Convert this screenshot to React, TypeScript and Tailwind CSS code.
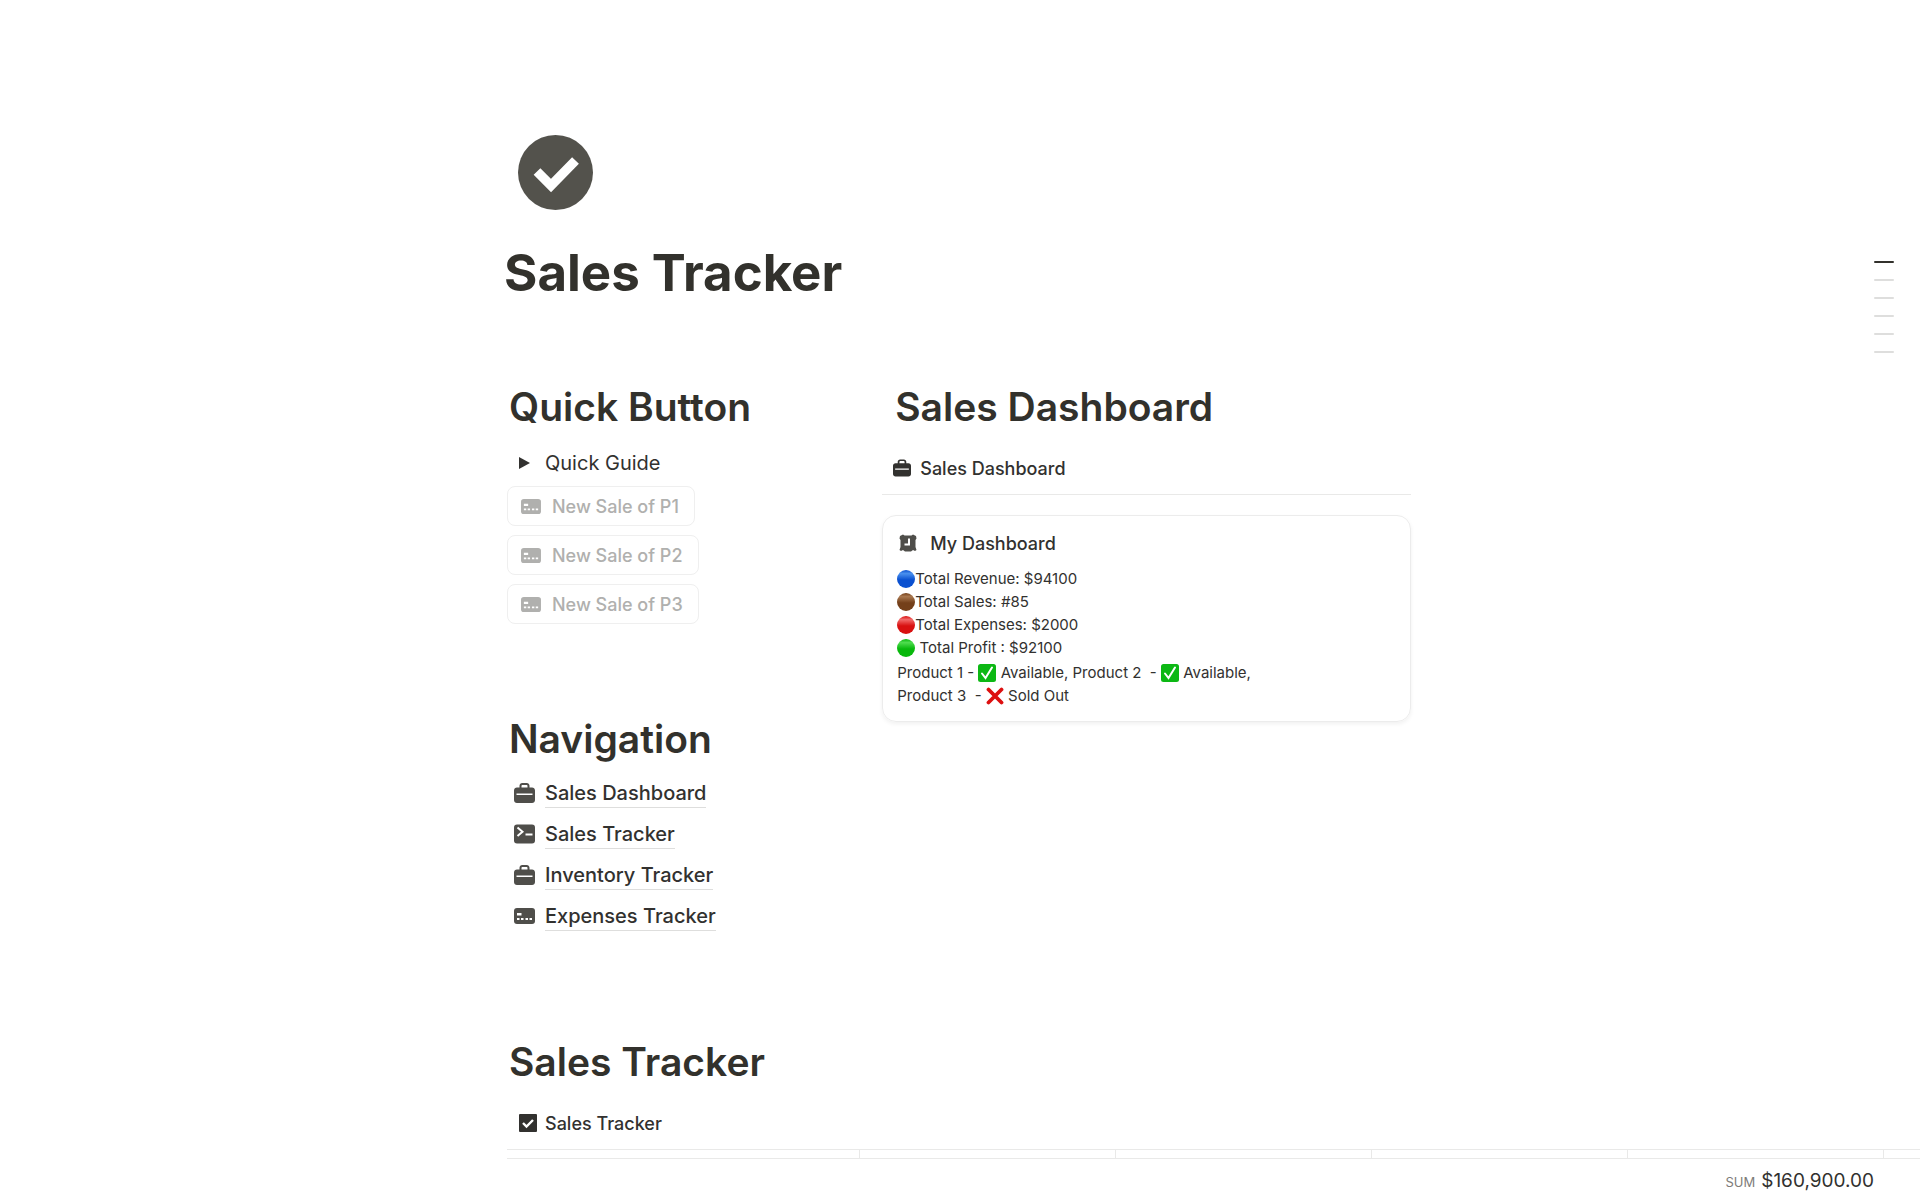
import type { ReactNode } from 'react';
import { clsx } from 'clsx';

type IconProps = { className?: string };

function BriefcaseIcon({ className }: IconProps) {
  return (
    <svg viewBox="0 0 21 20" fill="currentColor" className={className} aria-hidden="true">
      <path
        fillRule="evenodd"
        d="M5.500 4.500V2.800C5.500 1.200 6.700 0 8.300 0h4.400c1.600 0 2.800 1.200 2.800 2.800v1.700H18c1.700 0 3 1.300 3 3v3H0v-3c0-1.700 1.300-3 3-3Zm2 0h6V2.900c0-.6-.4-1-1-1h-4c-.6 0-1 .4-1 1Z"
      />
      <path d="M0 10h2.500v2h16v-2H21v7c0 1.700-1.300 3-3 3H3c-1.700 0-3-1.300-3-3Z" />
    </svg>
  );
}

function TerminalIcon({ className }: IconProps) {
  return (
    <svg viewBox="0 0 21 20" className={className} aria-hidden="true">
      <rect width="21" height="19" y=".5" rx="3" fill="currentColor" />
      <path d="m3.500 3.500 5 4.200-5 4.200M11.500 10.500H18.500" fill="none" stroke="#fff" strokeWidth="2" />
    </svg>
  );
}

function CardIcon({ className }: IconProps) {
  return (
    <svg viewBox="0 0 21 20" className={className} aria-hidden="true">
      <rect width="21" height="16" y="2" rx="3" fill="currentColor" />
      <path d="M3 7h4.500v2.500H3ZM3 12h2.500v2H3ZM7 12h2.500v2H7ZM11.500 12H14v2h-2.500ZM15.500 12H18v2h-2.500Z" fill="#fff" />
    </svg>
  );
}

function AlarmIcon({ className }: IconProps) {
  return (
    <svg viewBox="0 0 18 18" className={className} aria-hidden="true">
      <path
        d="M1 2 4 .5l1.500 1h7L14 .500 17 2l.5 2.500-1 1.500v7l1 3-1.500 1-2-1L12 17.500H6L4 16l-2 1-1.500-1 1-3V6l-1-1.500Z"
        fill="currentColor"
      />
      <path d="M10 4.500v6H5.500" fill="none" stroke="#fff" strokeWidth="2" />
    </svg>
  );
}

function CheckBoxIcon({ className }: IconProps) {
  return (
    <svg viewBox="0 0 18 18" className={className} aria-hidden="true">
      <rect width="18" height="18" rx="1" fill="currentColor" />
      <path d="m4 9 3.500 3.500L14 6" fill="none" stroke="#fff" strokeWidth="2.400" />
    </svg>
  );
}

function CheckCircleIcon({ className }: IconProps) {
  return (
    <svg viewBox="0 0 75 75" className={className} aria-hidden="true">
      <circle cx="37.500" cy="37.500" r="37.500" fill="currentColor" />
      <path d="m19 36.500 14 14L57.500 25.500" fill="none" stroke="#fff" strokeWidth="9.500" />
    </svg>
  );
}

function Dot({ id, from, to, label }: { id: string; from: string; to: string; label: string }) {
  return (
    <svg viewBox="0 0 18 18" className="size-[18px] shrink-0" role="img" aria-label={label}>
      <defs>
        <linearGradient id={id} x1="0" y1="0" x2="0" y2="1">
          <stop offset="0" stopColor={to} />
          <stop offset=".2" stopColor={from} />
          <stop offset=".55" stopColor={to} />
          <stop offset="1" stopColor={to} />
        </linearGradient>
      </defs>
      <circle cx="9" cy="9" r="9" fill={`url(#${id})`} />
    </svg>
  );
}

function GreenCheck() {
  return (
    <svg viewBox="0 0 18 18" className="inline-block size-[18px] align-[-4px]" role="img" aria-label="available">
      <rect width="18" height="18" rx="2.500" fill="#0cb814" />
      <path d="m4 9.500 3.500 4.500L14 3.500" fill="none" stroke="#fff" strokeWidth="2" strokeLinecap="round" />
    </svg>
  );
}

function RedCross() {
  return (
    <svg viewBox="0 0 18 18" className="inline-block size-[18px] align-[-4px]" role="img" aria-label="sold out">
      <path d="M2.500 2.500 15.500 15.500M15.500 2.500l-13 13" stroke="#dd1010" strokeWidth="3.800" strokeLinecap="round" />
    </svg>
  );
}

function Heading({ children, className }: { children: ReactNode; className?: string }) {
  return (
    <h2 className={clsx('text-[39px] leading-[50px] font-semibold text-[#32312c]', className)}>{children}</h2>
  );
}

const quickSales = ['New Sale of P1', 'New Sale of P2', 'New Sale of P3'];

const navItems = [
  { label: 'Sales Dashboard', icon: BriefcaseIcon },
  { label: 'Sales Tracker', icon: TerminalIcon },
  { label: 'Inventory Tracker', icon: BriefcaseIcon },
  { label: 'Expenses Tracker', icon: CardIcon },
];

const stats = [
  { id: 'revenue', text: 'Total Revenue: $94100', from: '#4a90ee', to: '#0a50d0', color: 'blue' },
  { id: 'sales', text: 'Total Sales: #85', from: '#a97850', to: '#74401a', color: 'brown' },
  { id: 'expenses', text: 'Total Expenses: $2000', from: '#f26a6a', to: '#d81010', color: 'red' },
  { id: 'profit', text: ' Total Profit : $92100', from: '#4fdc4f', to: '#08b80c', color: 'green' },
];

function QuickButtons() {
  return (
    <section>
      <Heading className="pl-0.5">Quick Button</Heading>
      <button type="button" className="mt-4 flex h-[30px] items-center text-[20px] leading-[30px]">
        <svg viewBox="0 0 11 12" className="ml-3 h-3 w-[11px]" fill="currentColor" aria-hidden="true">
          <path d="M0 0v12l11-6Z" />
        </svg>
        <span className="ml-[15px]">Quick Guide</span>
      </button>
      <div className="mt-2 flex flex-col items-start gap-[9px]">
        {quickSales.map((label) => (
          <button
            key={label}
            type="button"
            className="flex h-10 items-center gap-[11px] rounded-lg border border-[#efefef] pr-[15px] pl-[13px] text-[18px] font-medium text-[#b0b0ae]"
          >
            <CardIcon className="h-[19px] w-5" />
            {label}
          </button>
        ))}
      </div>
    </section>
  );
}

function Navigation() {
  return (
    <nav className="mt-[90px]">
      <Heading className="pl-0.5">Navigation</Heading>
      <ul className="mt-[15px]">
        {navItems.map((item) => (
          <li key={item.label} className="flex h-[41px] items-start gap-[10px] pl-[7px]">
            <item.icon className="mt-1 h-5 w-[21px] text-[#4f4e4a]" />
            <a href="#" className="border-b border-[#dededd] text-[20px] leading-[28px] font-medium">
              {item.label}
            </a>
          </li>
        ))}
      </ul>
    </nav>
  );
}

function Dashboard() {
  return (
    <section>
      <Heading className="pl-[13px]">Sales Dashboard</Heading>
      <div className="mt-2.5 flex h-[53px] items-center gap-[9px] border-b border-[#e9e9e8] pl-[11px] text-[18px] font-medium">
        <BriefcaseIcon className="h-[18px] w-[18px]" />
        Sales Dashboard
      </div>
      <article className="mt-5 rounded-[14px] border border-[#ececec] px-[14px] pt-3 pb-[14px] shadow-[0_2px_4px_rgba(0,0,0,0.06)]">
        <h3 className="flex h-[30px] items-center gap-[13px] pl-0.5 text-[18px] font-medium">
          <AlarmIcon className="size-[18px] text-[#4f4e4a]" />
          My Dashboard
        </h3>
        <ul className="mt-[9px] text-[15px] leading-[23px]">
          {stats.map((stat) => (
            <li key={stat.id} className="flex items-center whitespace-pre">
              <Dot id={stat.id} from={stat.from} to={stat.to} label={stat.color} />
              {stat.text}
            </li>
          ))}
        </ul>
        <p className="mt-0.5 text-[15px] leading-[23px] whitespace-pre">
          Product 1 - <GreenCheck /> Available, Product 2{'  '}- <GreenCheck /> Available,
          <br />
          Product 3{'  '}- <RedCross /> Sold Out
        </p>
      </article>
    </section>
  );
}

function SalesTable() {
  return (
    <section className="col-span-2 col-start-2 mt-[94px]">
      <Heading className="pl-0.5">Sales Tracker</Heading>
      <div className="mt-2.5 flex h-[52px] items-center gap-2 pl-3 text-[18px] font-medium">
        <CheckBoxIcon className="size-[18px]" />
        Sales Tracker
      </div>
      <table className="w-full table-fixed border-collapse border-t border-[#e9e9e8]">
        <colgroup>
          <col className="w-[352px]" />
          <col className="w-64" />
          <col className="w-64" />
          <col className="w-64" />
          <col className="w-64" />
          <col />
        </colgroup>
        <tbody>
          <tr className="h-[9px] border-b border-[#e9e9e8]">
            {[0, 1, 2, 3, 4].map((col) => (
              <td key={col} className="border-r border-[#e9e9e8] p-0" />
            ))}
            <td className="p-0" />
          </tr>
        </tbody>
        <tfoot>
          <tr>
            <td colSpan={4} />
            <td className="pt-1 pr-[9px] text-right leading-9 whitespace-nowrap">
              <span className="mr-1.5 text-[13px] text-[#7d7c78]">SUM</span>
              <span className="text-[19px]">$160,900.00</span>
            </td>
            <td />
          </tr>
        </tfoot>
      </table>
    </section>
  );
}

function Outline() {
  return (
    <div className="absolute top-[261px] right-[26px] flex flex-col gap-4">
      {[0, 1, 2, 3, 4, 5].map((line) => (
        <span key={line} className={clsx('h-0.5 w-5 rounded-sm', line === 0 ? 'bg-[#32312c]' : 'bg-[#dededd]')} />
      ))}
    </div>
  );
}

export default function App() {
  return (
    <div className="relative min-h-screen bg-white font-['Inter',sans-serif] text-[#32312f]">
      <div className="grid grid-cols-[1fr_minmax(0,906px)_1fr] pt-[135px]">
        <main className="col-start-2 pr-0.5">
          <CheckCircleIcon className="ml-[11px] size-[75px] text-[#53524c]" />
          <h1 className="mt-8 -ml-[3px] text-[51px] leading-[62px] font-bold text-[#32312c]">Sales Tracker</h1>
          <div className="mt-[78px] grid grid-cols-[3fr_5fr] gap-[58px]">
            <div>
              <QuickButtons />
              <Navigation />
            </div>
            <Dashboard />
          </div>
        </main>
        <SalesTable />
      </div>
      <Outline />
    </div>
  );
}
